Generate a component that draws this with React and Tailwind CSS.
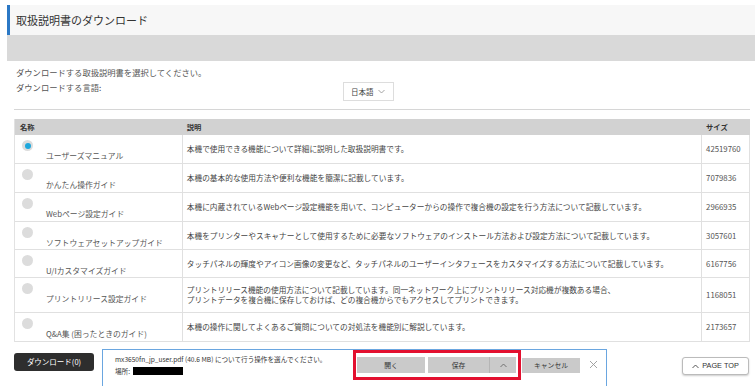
import React from "react";

const rows = [
  { name: "ユーザーズマニュアル", desc: ["本機で使用できる機能について詳細に説明した取扱説明書です。"], size: "42519760", h: "h-[29px]", sel: true },
  { name: "かんたん操作ガイド", desc: ["本機の基本的な使用方法や便利な機能を簡潔に記載しています。"], size: "7079836", h: "h-[29px]" },
  { name: "Webページ設定ガイド", desc: ["本機に内蔵されているWebページ設定機能を用いて、コンピューターからの操作で複合機の設定を行う方法について記載しています。"], size: "2966935", h: "h-[29px]" },
  { name: "ソフトウェアセットアップガイド", desc: ["本機をプリンターやスキャナーとして使用するために必要なソフトウェアのインストール方法および設定方法について記載しています。"], size: "3057601", h: "h-[28px]" },
  { name: "U/Iカスタマイズガイド", desc: ["タッチパネルの輝度やアイコン画像の変更など、タッチパネルのユーザーインタフェースをカスタマイズする方法について記載しています。"], size: "6167756", h: "h-[28px]" },
  { name: "プリントリリース設定ガイド", desc: ["プリントリリース機能の使用方法について記載しています。同一ネットワーク上にプリントリリース対応機が複数ある場合、", "プリントデータを複合機に保存しておけば、どの複合機からでもアクセスしてプリントできます。"], size: "1168051", h: "h-[35px]" },
  { name: "Q&A集 (困ったときのガイド)", desc: ["本機の操作に関してよくあるご質問についての対処法を機能別に解説しています。"], size: "2173657", h: "h-[29px]" },
];

export default function App() {
  return (
    <div className="w-[755px] h-[386px] overflow-hidden bg-white text-[#444] font-['Noto_Sans_CJK_JP','Noto_Sans',sans-serif]">
      <div className="pt-[5px]">
        <div className="ml-[7px] h-[30px] bg-[#f7f7f7] border-l-[3px] border-[#2b78c5] flex items-center pl-[6px] text-[11px] text-[#333]">
          取扱説明書のダウンロード
        </div>
        <div className="ml-[7px] h-[26px] bg-[#d9d9d9]" />
      </div>

      <div className="mx-[14px]">
        <div className="mt-[5px] pl-[2px] h-[12px] leading-[12px] text-[8.3px] text-[#555]">
          ダウンロードする取扱説明書を選択してください。
        </div>
        <div className="flex h-[29px] pl-[2px] text-[8.3px] text-[#555]">
          <div className="mt-[3px] leading-[12px] w-[327px]">ダウンロードする言語:</div>
          <div className="mt-[4px] h-[19px] w-[51px] border border-[#ddd] bg-white flex items-center pl-[7px] gap-[4px] text-[7.5px] text-[#444]">
            <span>日本語</span>
            <svg width="7" height="5" viewBox="0 0 7 5" fill="none" stroke="#999" strokeWidth="0.9">
              <path d="M0.5 1 L3.5 4 L6.5 1" />
            </svg>
          </div>
        </div>
        <div className="mt-[2px] h-px bg-[#d6d6d6] w-[736px]" />

        <div className="mt-[9px] w-[736px] border-l border-[#e2e2e2]">
          <div className="flex h-[16px] bg-[#d2d2d2] text-[7.3px] font-bold text-[#333] items-center">
            <div className="w-[168px] pl-[5px]">名称</div>
            <div className="w-[520px] pl-[4px]">説明</div>
            <div className="w-[48px] pl-[4px]">サイズ</div>
          </div>
          {rows.map((r, i) => (
            <div key={i} className={`flex ${r.h} border-b border-[#e0e0e0]`}>
              <div className="w-[168px] border-r border-[#e0e0e0] pt-[5px]">
                <div className="ml-[7px] w-[11px] h-[11px] rounded-full bg-[#dcdcdc] flex items-center justify-center">
                  {r.sel && <div className="w-[6px] h-[6px] rounded-full bg-[#1ea7dc]" />}
                </div>
                <div className="ml-[31px] mt-[-1px] leading-[12px] text-[7.8px] text-[#555] whitespace-nowrap">{r.name}</div>
              </div>
              <div className="w-[520px] border-r border-[#e0e0e0] pl-[4px] flex flex-col justify-center text-[7.7px] leading-[10px] text-[#444] whitespace-nowrap">
                {r.desc.map((d, j) => (
                  <div key={j}>{d}</div>
                ))}
              </div>
              <div className="w-[48px] border-r border-[#e0e0e0] pl-[4px] flex items-center text-[7.8px] text-[#555]">
                {r.size}
              </div>
            </div>
          ))}
        </div>
      </div>

      <div className="flex items-start mt-[7px]">
        <div className="ml-[14px] mt-[4px] w-[80px] h-[18px] rounded-[3px] bg-[#2e2e2e] text-white text-[7.5px] flex items-center justify-center">
          ダウンロード(0)
        </div>
        <div className="ml-[8px] w-[505px] h-[40px] border-t border-x border-[#6aa6e0] bg-white flex items-start">
          <div className="w-[250px] pl-[12px] pt-[3px] text-[6.6px] leading-[12px] text-[#333] whitespace-nowrap">
            <div>mx3650fn_jp_user.pdf (40.6 MB) について行う操作を選んでください。</div>
            <div className="flex items-center gap-[3px]">
              <span>場所:</span>
              <span className="inline-block w-[50px] h-[8px] bg-black" />
            </div>
          </div>
          <div className="w-[168px] h-[30px] border-[3px] border-[#e3102f] flex items-center pl-[1px] text-[6.8px] text-[#333]">
            <div className="w-[68px] h-[16px] bg-[#cacaca] flex items-center justify-center">開く</div>
            <div className="ml-[3px] w-[62px] h-[16px] bg-[#cacaca] flex items-center justify-center border-r border-[#b5b5b5]">保存</div>
            <div className="w-[26px] h-[16px] bg-[#cacaca] flex items-center justify-center">
              <svg width="7" height="5" viewBox="0 0 7 5" fill="none" stroke="#666" strokeWidth="0.9">
                <path d="M0.5 4 L3.5 1 L6.5 4" />
              </svg>
            </div>
          </div>
          <div className="ml-[1px] mt-[8px] w-[58px] h-[15px] bg-[#cacaca] flex items-center justify-center text-[6.8px] text-[#333]">
            キャンセル
          </div>
          <div className="ml-[9px] mt-[10px] text-[#999]">
            <svg width="9" height="9" viewBox="0 0 9 9" stroke="#999" strokeWidth="0.9">
              <path d="M1 1 L8 8 M8 1 L1 8" />
            </svg>
          </div>
        </div>
        <div className="ml-[75px] mt-[8px] w-[67px] h-[18px] border border-[#bbb] rounded-[3px] bg-white shadow-[0_1px_2px_rgba(0,0,0,0.2)] flex items-center justify-center gap-[3px] text-[7.3px] text-[#333] font-['Liberation_Sans',sans-serif]">
          <svg width="7" height="5" viewBox="0 0 7 5" fill="none" stroke="#444" strokeWidth="0.9">
            <path d="M0.5 4 L3.5 1 L6.5 4" />
          </svg>
          <span>PAGE TOP</span>
        </div>
      </div>
    </div>
  );
}
